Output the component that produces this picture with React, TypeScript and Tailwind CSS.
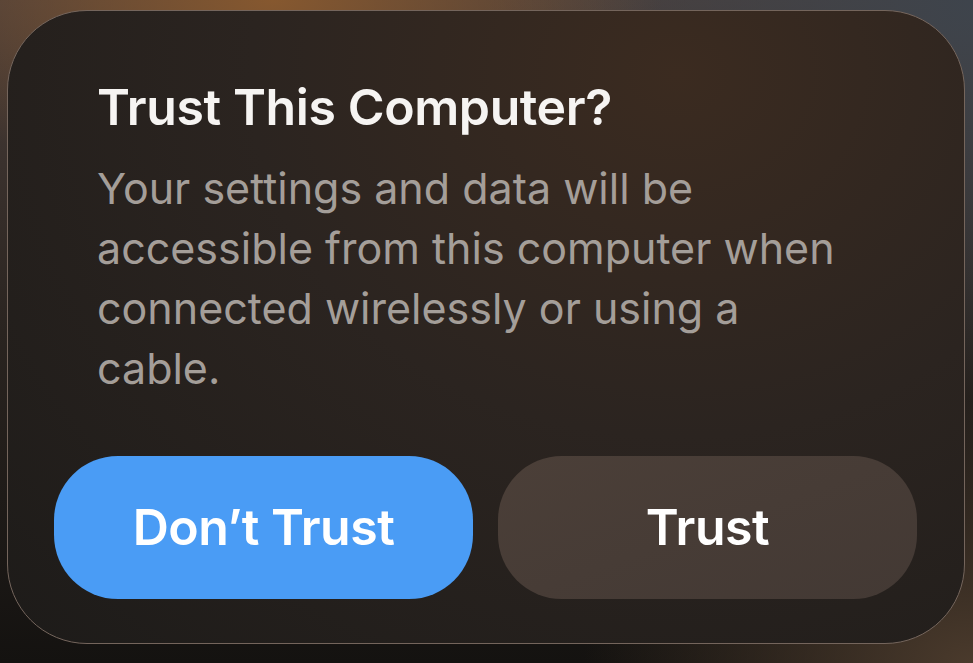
const App = () => {
  return (
    <div className="w-[973px] h-[663px] overflow-hidden bg-[radial-gradient(ellipse_40%_30%_at_28%_0%,#86582f_0%,transparent_100%),radial-gradient(ellipse_50%_60%_at_100%_0%,#3e444c_0%,transparent_100%),radial-gradient(ellipse_40%_40%_at_100%_100%,#4a3a2c_0%,transparent_100%),linear-gradient(180deg,#4a3e3a_0%,#2a2420_50%,#141210_100%)] pt-[10px] pl-[7px] font-['Inter','Noto_Sans',sans-serif]">
      <div className="w-[958px] h-[634px] rounded-[80px] border border-[#74655c] bg-[radial-gradient(ellipse_at_70%_10%,#3b2b20_0%,#2b2420_45%,#1d1b19_100%)] px-[46px] pt-[66px] flex flex-col">
        <div className="pl-[43px]">
          <h1 className="text-[50px] leading-[60px] font-semibold text-[#f6f4f2] tracking-[-0.4px]">
            Trust This Computer?
          </h1>
          <p className="mt-[21px] text-[43px] leading-[60px] text-[#a49e99]">
            Your settings and data will be
            <br />
            accessible from this computer when
            <br />
            connected wirelessly or using a
            <br />
            cable.
          </p>
        </div>
        <div className="mt-[58px] flex gap-[25px]">
          <button className="w-[419px] h-[143px] shrink-0 rounded-[64px] bg-[#4a9cf5] text-white text-[50px] font-semibold tracking-[-0.5px]">
            Don’t Trust
          </button>
          <button className="w-[419px] h-[143px] shrink-0 rounded-[64px] bg-[linear-gradient(160deg,#4b3f38_0%,#433934_100%)] text-white text-[50px] font-semibold tracking-[-0.5px]">
            Trust
          </button>
        </div>
      </div>
    </div>
  );
};

export default App;
